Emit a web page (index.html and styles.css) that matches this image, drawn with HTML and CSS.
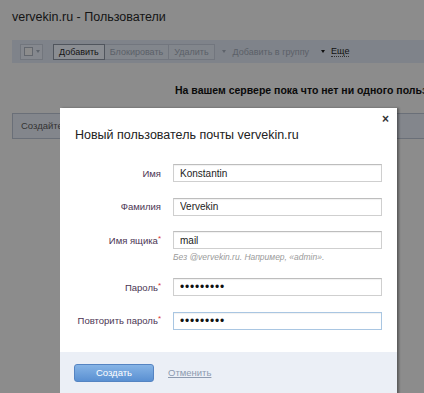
FILE: index.html
```html
<!DOCTYPE html>
<html lang="ru">
<head>
<meta charset="utf-8">
<title>vervekin.ru - Пользователи</title>
<link rel="stylesheet" href="styles.css">
</head>
<body>
<div class="page">
  <h1 class="title">vervekin.ru - Пользователи</h1>
  <div class="toolbar">
    <span class="tb-check"><span class="cbox"></span><span class="tri"></span></span>
    <span class="tb-group">
      <span class="tb-btn active">Добавить</span><span class="tb-btn">Блокировать</span><span class="tb-btn">Удалить</span>
    </span>
    <span class="tb-drop disabled"><span class="tri"></span>Добавить в группу</span>
    <span class="tb-drop"><span class="tri dark"></span><span class="more">Еще</span></span>
  </div>
  <div class="empty">На вашем сервере пока что нет ни одного пользователя</div>
  <div class="hintbox">Создайте</div>
</div>
<div class="modal">
  <span class="close">×</span>
  <div class="m-title">Новый пользователь почты vervekin.ru</div>
  <div class="form">
    <div class="row"><label class="lbl">Имя</label><input class="field" type="text" value="Konstantin"></div>
    <div class="row"><label class="lbl">Фамилия</label><input class="field" type="text" value="Vervekin"></div>
    <div class="row tight"><label class="lbl">Имя ящика<sup>*</sup></label><input class="field" type="text" value="mail"></div>
    <div class="note">Без @vervekin.ru. Например, «admin».</div>
    <div class="row"><label class="lbl">Пароль<sup>*</sup></label><input class="field pw" type="text" value="•••••••••"></div>
    <div class="row"><label class="lbl">Повторить пароль<sup>*</sup></label><input class="field pw focus" type="text" value="•••••••••"></div>
  </div>
  <div class="footer">
    <span class="btn-create">Создать</span>
    <a class="cancel" href="#">Отменить</a>
  </div>
</div>
</body>
</html>
```
FILE: styles.css
```css
html, body {
  margin: 0;
  padding: 0;
  background: #8c8c8c;
  font-family: "Liberation Sans", Arial, sans-serif;
  overflow: hidden;
  width: 424px;
  height: 393px;
}
.page {
  padding: 0 0 0 12px;
  white-space: nowrap;
  overflow: hidden;
}
.title {
  margin: 9px 0 0;
  font-size: 12.5px;
  line-height: 16px;
  font-weight: normal;
  color: #141414;
}
.toolbar {
  margin-top: 15px;
  height: 23px;
  background: #7f838a;
  display: flex;
  align-items: center;
  padding-left: 8px;
  font-size: 9px;
}
.tb-check {
  height: 14px;
  border: 1px solid #72767d;
  background: #85888e;
  display: flex;
  align-items: center;
  padding-left: 3px;
  gap: 3px;
  width: 18px;
}
.cbox {
  width: 7px;
  height: 7px;
  border: 1px solid #63676e;
  background: #8c8c8c;
}
.tri {
  width: 0;
  height: 0;
  border-left: 2.5px solid transparent;
  border-right: 2.5px solid transparent;
  border-top: 3px solid #5e636b;
}
.tri.dark { border-top-color: #111; }
.tb-group {
  display: flex;
  margin-left: 10px;
}
.tb-btn {
  height: 14px;
  line-height: 14px;
  padding: 0 5px;
  border: 1px solid #72767e;
  border-left-width: 0;
  background: #82868c;
  color: #5b6068;
}
.tb-btn.active {
  background: #8a8d92;
  border: 1px solid #50555d;
  color: #141414;
}
.tb-drop {
  display: flex;
  align-items: center;
  gap: 7px;
  margin-left: 7px;
  color: #111;
}
.tb-drop.disabled { color: #5b6068; }
.tb-drop + .tb-drop { margin-left: 12px; gap: 6px; }
.more {
  border-bottom: 1px dotted #333;
  line-height: 10px;
}
.empty {
  margin-top: 20px;
  padding-left: 163px;
  font-size: 10.5px;
  font-weight: bold;
  line-height: 14px;
  color: #0a0a0a;
}
.hintbox {
  margin-top: 16px;
  height: 24px;
  line-height: 24px;
  border: 1px solid #6a6f78;
  border-right: 0;
  background: #83868c;
  padding-left: 8px;
  font-size: 9.5px;
  color: #333;
}
.modal {
  position: absolute;
  left: 60px;
  top: 108px;
  width: 337px;
  height: 300px;
  background: #fff;
  box-shadow: 2px 0 2px rgba(0, 0, 0, 0.35);
  display: flex;
  flex-direction: column;
}
.close {
  position: absolute;
  right: 8px;
  top: 4px;
  font-size: 12px;
  font-weight: bold;
  color: #333;
}
.m-title {
  margin: 19px 0 0 15px;
  font-size: 12.5px;
  line-height: 16px;
  color: #222;
}
.form {
  padding: 21px 0 22px;
}
.row {
  display: flex;
  align-items: center;
  margin-bottom: 15.5px;
}
.row.tight { margin-bottom: 0; }
.row:last-child { margin-bottom: 0; }
.lbl {
  width: 101px;
  text-align: right;
  font-size: 9.5px;
  color: #4b3553;
  margin-right: 12px;
}
.lbl sup {
  color: #d33;
  font-size: 8px;
  vertical-align: 3px;
  line-height: 0;
}
.field {
  box-sizing: border-box;
  width: 209px;
  height: 18px;
  margin: 0;
  border: 1px solid #cfcfcf;
  border-top-color: #bdbdbd;
  box-shadow: inset 0 1px 1px rgba(0, 0, 0, 0.06);
  padding: 0 6px;
  font-family: "Liberation Sans", Arial, sans-serif;
  font-size: 10px;
  color: #222;
  outline: none;
  background: #fff;
}
.field.pw {
  font-size: 12px;
  letter-spacing: 0.8px;
  color: #111;
}
.field.focus {
  border-color: #a9c6e2;
}
.note {
  margin: 2px 0 15px 113px;
  font-size: 8.5px;
  line-height: 12px;
  font-style: italic;
  color: #9a9a9a;
}
.footer {
  flex: 1;
  background: #ebeff6;
  padding: 12px 0 0 14px;
  display: flex;
  align-items: flex-start;
  gap: 14px;
}
.btn-create {
  box-sizing: border-box;
  width: 80px;
  height: 18px;
  line-height: 16px;
  text-align: center;
  color: #fff;
  font-size: 9.5px;
  border: 1px solid #5584c2;
  border-radius: 3px;
  background: linear-gradient(#86b4e6, #5a90d2);
}
.cancel {
  font-size: 9.5px;
  line-height: 18px;
  color: #8d9bb0;
  text-decoration: underline;
}
```
